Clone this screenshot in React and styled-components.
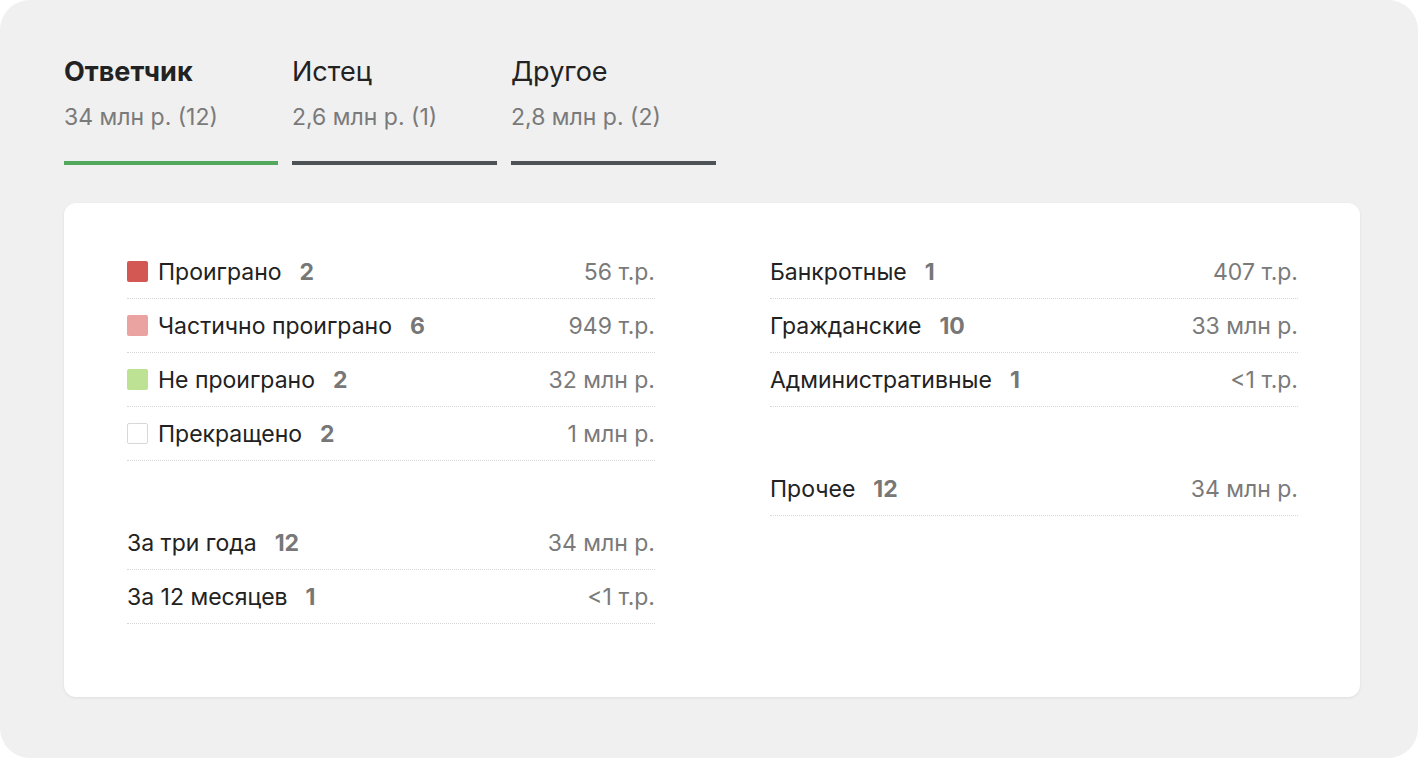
import React from 'react';
import styled, { createGlobalStyle } from 'styled-components';

const Global = createGlobalStyle`
  html, body { margin: 0; background: #fff; }
  body { font-family: Inter, "Noto Sans", sans-serif; }
`;

const Frame = styled.div`
  width: 1418px;
  height: 758px;
  box-sizing: border-box;
  background: #f0f0f0;
  border-radius: 30px;
  padding: 52px 58px 0 64px;
`;

const Tabs = styled.div`
  display: flex;
  gap: 14px;
`;

const Tab = styled.div`
  width: ${p => p.$w}px;
  padding-bottom: 29px;
  border-bottom: 4px solid ${p => (p.$active ? '#52a95c' : '#4d5257')};
`;

const TabTitle = styled.div`
  font-size: 27px;
  line-height: 40px;
  color: #222;
  font-weight: ${p => (p.$active ? 700 : 400)};
`;

const TabSub = styled.div`
  font-size: 23px;
  line-height: 30px;
  margin-top: 10px;
  color: #7a7a7a;
`;

const Card = styled.div`
  margin-top: 38px;
  background: #fff;
  border-radius: 12px;
  box-shadow: 0 1px 3px rgba(0, 0, 0, 0.08);
  height: 494px;
  box-sizing: border-box;
  padding: 42px 63px 0 63px;
  display: grid;
  grid-template-columns: 528px 528px;
  column-gap: 115px;
`;

const Column = styled.div`
  display: flex;
  flex-direction: column;
`;

const Row = styled.div`
  height: 54px;
  box-sizing: border-box;
  display: flex;
  align-items: center;
  border-bottom: 1px dotted #d6d6d6;
  font-size: 23px;
  color: #222;
`;

const Spacer = styled.div`
  height: 55px;
`;

const Swatch = styled.span`
  width: 21px;
  height: 21px;
  box-sizing: border-box;
  border-radius: 2px;
  margin-right: 10px;
  background: ${p => p.$c};
  border: ${p => (p.$c === '#fff' ? '1px solid #d8d8d8' : 'none')};
`;

const Count = styled.span`
  font-weight: 700;
  color: #777;
  margin-left: 18px;
`;

const Value = styled.span`
  margin-left: auto;
  color: #7a7a7a;
`;

const Line = ({ c, label, n, v }) => (
  <Row>
    {c && <Swatch $c={c} />}
    {label}
    <Count>{n}</Count>
    <Value>{v}</Value>
  </Row>
);

export default function App() {
  return (
    <>
      <Global />
      <Frame>
        <Tabs>
          <Tab $w={214} $active>
            <TabTitle $active>Ответчик</TabTitle>
            <TabSub>34 млн р. (12)</TabSub>
          </Tab>
          <Tab $w={205}>
            <TabTitle>Истец</TabTitle>
            <TabSub>2,6 млн р. (1)</TabSub>
          </Tab>
          <Tab $w={205}>
            <TabTitle>Другое</TabTitle>
            <TabSub>2,8 млн р. (2)</TabSub>
          </Tab>
        </Tabs>
        <Card>
          <Column>
            <Line c="#d35752" label="Проиграно" n="2" v="56 т.р." />
            <Line c="#eaa3a1" label="Частично проиграно" n="6" v="949 т.р." />
            <Line c="#bde293" label="Не проиграно" n="2" v="32 млн р." />
            <Line c="#fff" label="Прекращено" n="2" v="1 млн р." />
            <Spacer />
            <Line label="За три года" n="12" v="34 млн р." />
            <Line label="За 12 месяцев" n="1" v="<1 т.р." />
          </Column>
          <Column>
            <Line label="Банкротные" n="1" v="407 т.р." />
            <Line label="Гражданские" n="10" v="33 млн р." />
            <Line label="Административные" n="1" v="<1 т.р." />
            <Spacer />
            <Line label="Прочее" n="12" v="34 млн р." />
          </Column>
        </Card>
      </Frame>
    </>
  );
}
